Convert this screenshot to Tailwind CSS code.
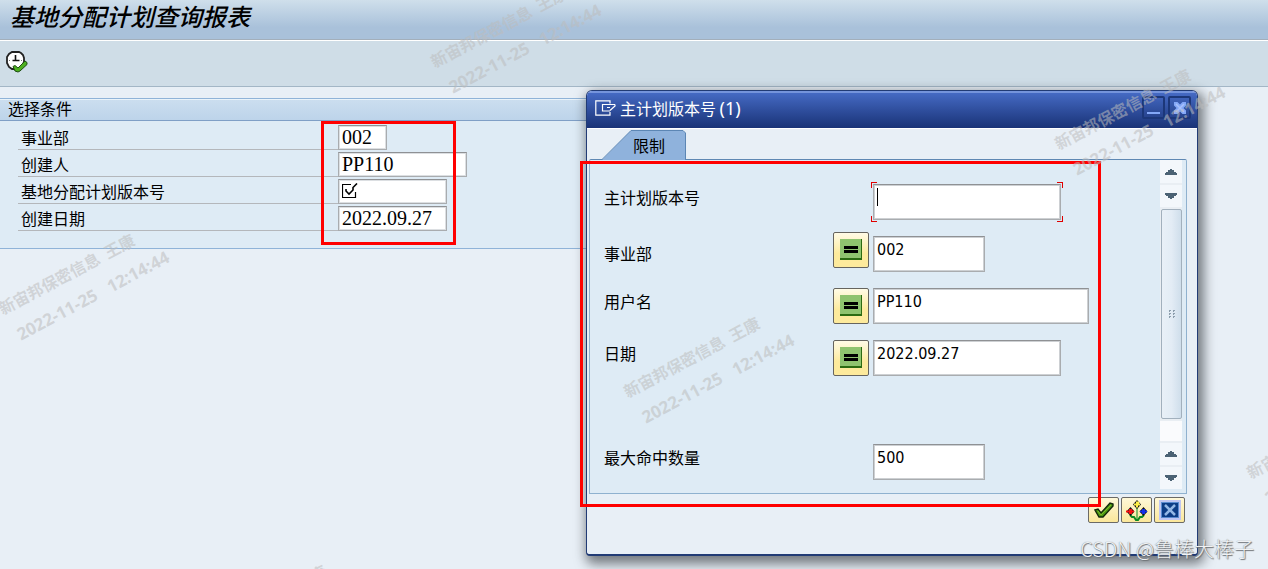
<!DOCTYPE html>
<html lang="zh-CN">
<head>
    <meta charset="UTF-8">
    <meta name="viewport" content="width=device-width, initial-scale=1.0">
    <title>基地分配计划查询报表</title>
    <script src="https://cdn.jsdelivr.net/npm/@tailwindcss/browser@4"></script>
</head>
<body class="relative min-h-screen overflow-hidden bg-[#e8eff6] font-['Noto_Sans_CJK_SC',sans-serif] text-base text-black">
    <!-- Title bar -->
    <header class="h-10 border-b border-[#a3afbb] bg-linear-to-b from-[#cfdfeb] to-[#a9c1da] to-70% px-2.5">
        <h1 class="text-2xl leading-8 font-medium italic">基地分配计划查询报表</h1>
    </header>

    <!-- Toolbar -->
    <div class="flex h-[47px] items-start border-t border-b border-t-white border-b-[#a3b6c6] bg-[#cfdde7] px-1.5 pt-2.5">
        <button type="button" aria-label="执行">
            <svg class="size-[22px]" viewBox="0 0 22 22" fill="none">
                <path d="M6 1h7l2 1 2 2 1 3v4l-2 4-3 3H6l-3-2-2-4V6l2-3z" fill="#fff" stroke="#222" stroke-width="1.800"/>
                <path d="M9.500 4v6M6.500 9.500h7" stroke="#111" stroke-width="1.600"/>
                <path d="M3 9.500h1M15 9.500h1M9.500 15v1" stroke="#777"/>
                <path d="M7 15.500l2-1 3 2.500 7-7 2 1.500v2L14 20l-2 1-3-1z" fill="#4db020" stroke="#1d4d10"/>
            </svg>
        </button>
    </div>

    <!-- Selection criteria -->
    <main class="w-1/2 pt-[11px]">
        <section class="border-y border-[#8fb3d8] bg-[#deebf5]">
            <h2 class="border-t border-b border-t-[#e9f3fa] border-b-[#7f9fc6] bg-linear-to-b from-[#cbdeef] to-[#bdd4ea] pb-1 pl-2 leading-4">选择条件</h2>
            <form class="flex flex-col gap-0.5 pt-1 pb-[17px] pl-[18px]">
                <div class="flex h-[25px]">
                    <label for="division" class="w-80 border-b border-[#b4b7bb] pl-[3px] leading-6">事业部</label>
                    <input id="division" value="002" class="w-[49px] border border-[#a9acaf] border-t-[#8f9194] bg-white pl-[3px] font-['Liberation_Serif',serif] text-xl leading-5 shadow-[inset_0_0_0_1px_#dcdfe2]">
                </div>
                <div class="flex h-[25px]">
                    <label for="creator" class="w-80 border-b border-[#b4b7bb] pl-[3px] leading-6">创建人</label>
                    <input id="creator" value="PP110" class="w-[129px] border border-[#a9acaf] border-t-[#8f9194] bg-white pl-[3px] font-['Liberation_Serif',serif] text-xl leading-5 shadow-[inset_0_0_0_1px_#dcdfe2]">
                </div>
                <div class="flex h-[25px]">
                    <label for="version" class="w-80 border-b border-[#b4b7bb] pl-[3px] leading-6">基地分配计划版本号</label>
                    <div class="relative">
                        <input id="version" class="h-full w-[109px] border border-[#a9acaf] border-t-[#8f9194] bg-white pl-[3px] font-['Liberation_Serif',serif] text-xl leading-5 shadow-[inset_0_0_0_1px_#dcdfe2]">
                        <svg class="pointer-events-none absolute top-1 left-1 size-4" viewBox="0 0 16 16" fill="none" stroke="#000">
                            <path d="M9 1.500H.5v13h13V9" stroke-width="1.200"/>
                            <path d="M4 6v2l3 3 4-4V4.500l4-4" stroke-width="1.600"/>
                        </svg>
                    </div>
                </div>
                <div class="flex h-[25px]">
                    <label for="created" class="w-80 border-b border-[#b4b7bb] pl-[3px] leading-6">创建日期</label>
                    <input id="created" value="2022.09.27" class="w-[109px] border border-[#a9acaf] border-t-[#8f9194] bg-white pl-[3px] font-['Liberation_Serif',serif] text-xl leading-5 shadow-[inset_0_0_0_1px_#dcdfe2]">
                </div>
            </form>
        </section>
    </main>

    <!-- Value restriction dialog -->
    <div role="dialog" aria-labelledby="dialog-title" class="absolute top-[90px] left-[586px] w-[612px] overflow-hidden rounded-t-md rounded-b-sm border border-b-2 border-[#213b75] bg-[#e8eff6] shadow-[3px_5px_12px_3px_rgba(40,45,50,0.6)]">
        <div class="flex h-[37px] items-start border-t-2 border-[#7594dc] bg-linear-to-b from-[#456ac4] to-[#1a3377] pt-[3px] pr-1.5 pl-2 text-white">
            <svg class="mt-1 mr-1 h-4 w-[21px]" viewBox="0 0 21 16" fill="none" stroke="#fff" stroke-width="1.200">
                <path d="M15 3.500V.8H.800v14.400H15V12"/>
                <path d="M20 4.500H7.500v6.500H15M20 4.500v1.500l-5 4.500M12 7.500h3"/>
            </svg>
            <h2 id="dialog-title" class="flex-1 leading-6">主计划版本号 <span class="font-['Noto_Sans',sans-serif] text-lg leading-6">(1)</span></h2>
            <div class="flex gap-[3px]">
                <button type="button" aria-label="最小化" class="flex size-[23px] items-end justify-center rounded-xs border-2 border-[#1c3779] pb-[3px]">
                    <svg class="h-0.5 w-[13px]" viewBox="0 0 13 2"><path d="M0 0h13v2H0z" fill="#84a8f7"/></svg>
                </button>
                <button type="button" aria-label="关闭" class="flex size-[23px] items-center justify-center rounded-xs border-2 border-[#1c3779]">
                    <svg class="size-3" viewBox="0 0 12 12"><path d="M0 0h3.500L6 2.500 8.500 0H12v3.500L9.500 6 12 8.500V12H8.500L6 9.500 3.500 12H0V8.500L2.500 6 0 3.500z" fill="#84a8f7"/><path d="M2 2l8 8M10 2l-8 8" stroke="#a9c1fb" stroke-width="1.500"/></svg>
                </button>
            </div>
        </div>

        <div class="border-t border-white pt-px">
            <button type="button" role="tab" aria-selected="true" class="relative z-10 -mb-px ml-[15px] block h-[30px] w-[84px]">
                <svg class="absolute inset-0 h-full w-full" viewBox="0 0 84 30">
                    <path d="M0 30L29 .5H81l2.500 2.500V30z" fill="#8fb2dc"/>
                    <path d="M0 29.500L29 .5H81l2.500 2.500V30" fill="none" stroke="#5c86b4"/>
                </svg>
                <span class="relative pl-2.5">限制</span>
            </button>

            <div class="mr-2.5 ml-0.5 flex rounded-t-xs border border-[#8fb1cf] border-t-[#5f88b3] bg-[#deebf5]">
                <form class="flex-1 pt-6 pb-[13px] pl-3.5">
                    <div class="flex h-9 items-start">
                        <label for="plan-version" class="w-[269px] pt-px">主计划版本号</label>
                        <div class="relative">
                            <input id="plan-version" class="h-9 w-[188px] border border-[#a9acaf] border-t-[#8f9194] bg-white pb-2.5 pl-[3px] text-base shadow-[inset_0_0_0_1px_#cdd0d3]">
                            <span class="absolute top-1 left-1 h-[18px] w-px bg-black"></span>
                            <span class="absolute -top-0.5 -left-0.5 size-1.5 border-t border-l border-[#e00000]"></span>
                            <span class="absolute -top-0.5 -right-0.5 size-1.5 border-t border-r border-[#e00000]"></span>
                            <span class="absolute -bottom-0.5 -left-0.5 size-1.5 border-b border-l border-[#e00000]"></span>
                            <span class="absolute -right-0.5 -bottom-0.5 size-1.5 border-r border-b border-[#e00000]"></span>
                        </div>
                    </div>
                    <div class="mt-3 flex h-10 items-start">
                        <label for="dialog-division" class="w-[229px] pt-[9px]">事业部</label>
                        <button type="button" aria-label="等于" class="mr-1 flex size-9 items-center justify-center rounded-xs border border-[#66645e] bg-linear-to-b from-[#fffbe6] to-[#fdea9c] to-60%">
                            <svg class="size-[22px]" viewBox="0 0 22 22"><path d="M0 0h22v21H0z" fill="#8fc36f"/><path d="M21 0h1v21H0v-2h21z" fill="#2c6b12"/><path d="M4 7h14v3H4zM4 11h14v3H4z"/></svg>
                        </button>
                        <input id="dialog-division" value="002" class="mt-1 h-9 w-28 border border-[#a9acaf] border-t-[#8f9194] bg-white pb-2.5 pl-[3px] font-['DejaVu_Sans_Condensed','Noto_Sans',sans-serif] text-base shadow-[inset_0_0_0_1px_#cdd0d3]">
                    </div>
                    <div class="mt-4 flex h-9 items-start">
                        <label for="user-name" class="w-[229px] pt-px">用户名</label>
                        <button type="button" aria-label="等于" class="mr-1 flex size-9 items-center justify-center rounded-xs border border-[#66645e] bg-linear-to-b from-[#fffbe6] to-[#fdea9c] to-60%">
                            <svg class="size-[22px]" viewBox="0 0 22 22"><path d="M0 0h22v21H0z" fill="#8fc36f"/><path d="M21 0h1v21H0v-2h21z" fill="#2c6b12"/><path d="M4 7h14v3H4zM4 11h14v3H4z"/></svg>
                        </button>
                        <input id="user-name" value="PP110" class="h-9 w-54 border border-[#a9acaf] border-t-[#8f9194] bg-white pb-2.5 pl-[3px] font-['DejaVu_Sans_Condensed','Noto_Sans',sans-serif] text-base shadow-[inset_0_0_0_1px_#cdd0d3]">
                    </div>
                    <div class="mt-4 flex h-9 items-start">
                        <label for="dialog-date" class="w-[229px] pt-px">日期</label>
                        <button type="button" aria-label="等于" class="mr-1 flex size-9 items-center justify-center rounded-xs border border-[#66645e] bg-linear-to-b from-[#fffbe6] to-[#fdea9c] to-60%">
                            <svg class="size-[22px]" viewBox="0 0 22 22"><path d="M0 0h22v21H0z" fill="#8fc36f"/><path d="M21 0h1v21H0v-2h21z" fill="#2c6b12"/><path d="M4 7h14v3H4zM4 11h14v3H4z"/></svg>
                        </button>
                        <input id="dialog-date" value="2022.09.27" class="h-9 w-[188px] border border-[#a9acaf] border-t-[#8f9194] bg-white pb-2.5 pl-[3px] font-['DejaVu_Sans_Condensed','Noto_Sans',sans-serif] text-base shadow-[inset_0_0_0_1px_#cdd0d3]">
                    </div>
                    <div class="mt-17 flex h-9 items-start">
                        <label for="max-hits" class="w-[269px] pt-px">最大命中数量</label>
                        <input id="max-hits" value="500" class="h-9 w-28 border border-[#a9acaf] border-t-[#8f9194] bg-white pb-2.5 pl-[3px] font-['DejaVu_Sans_Condensed','Noto_Sans',sans-serif] text-base shadow-[inset_0_0_0_1px_#cdd0d3]">
                    </div>
                </form>

                <!-- Scrollbar -->
                <div class="mr-1 mb-1 flex w-[22px] flex-col gap-0.5 bg-[#e9eef3]">
                    <button type="button" aria-label="向上" class="flex h-[23px] items-center justify-center bg-[#f3f7fb]">
                        <svg class="h-1.5 w-3" viewBox="0 0 12 6"><path d="M5 0h2v1h2v2h2v1h1v2H0V4h1V3h2V1h2z" fill="#4b6274"/></svg>
                    </button>
                    <button type="button" aria-label="向下" class="flex h-[22px] items-center justify-center bg-[#f3f7fb]">
                        <svg class="h-1.5 w-3" viewBox="0 0 12 6"><path d="M5 6h2V5h2V3h2V2h1V0H0v2h1v1h2v2h2z" fill="#4b6274"/></svg>
                    </button>
                    <div class="ml-px flex flex-1 items-center justify-center rounded-xs border border-[#a2b0bd] bg-linear-to-r from-[#e9f0f7] via-[#e3ecf5] to-[#cfdeeb]">
                        <svg class="h-2 w-1.5" viewBox="0 0 6 8"><path d="M0 0h2v1H1v1H0zM4 0h2v1H5v1H4zM0 3h2v1H1v1H0zM4 3h2v1H5v1H4zM0 6h2v1H1v1H0zM4 6h2v1H5v1H4z" fill="#8c9dac"/></svg>
                    </div>
                    <div class="h-5 bg-[#fafbfd]"></div>
                    <button type="button" aria-label="上一页" class="flex h-[22px] items-center justify-center bg-[#f3f7fb]">
                        <svg class="h-1.5 w-3" viewBox="0 0 12 6"><path d="M5 0h2v1h2v2h2v1h1v2H0V4h1V3h2V1h2z" fill="#4b6274"/></svg>
                    </button>
                    <button type="button" aria-label="下一页" class="flex h-[22px] items-center justify-center bg-[#f3f7fb]">
                        <svg class="h-1.5 w-3" viewBox="0 0 12 6"><path d="M5 6h2V5h2V3h2V2h1V0H0v2h1v1h2v2h2z" fill="#4b6274"/></svg>
                    </button>
                </div>
            </div>
        </div>

        <div class="flex justify-end gap-0.5 pt-[3px] pr-3 pb-[31px]">
            <button type="button" aria-label="确认" class="flex h-[26px] w-[31px] items-center justify-center rounded-xs border border-[#6b6a66] bg-linear-to-b from-[#fff8d8] to-[#fbe79a]">
                <svg class="h-4 w-5" viewBox="0 0 20 16"><path d="M1 8l3-1 3 4L16 1l3 1v2L9 15H5z" fill="#4f9a12" stroke="#12280a" stroke-width="1.400"/><path d="M4 9l3 4L17 3" fill="none" stroke="#7cbb2c"/></svg>
            </button>
            <button type="button" aria-label="多项选择" class="flex h-[26px] w-[31px] items-center justify-center rounded-xs border border-[#6b6a66] bg-linear-to-b from-[#fff8d8] to-[#fbe79a]">
                <svg class="h-[21px] w-[22px]" viewBox="0 0 22 21">
                    <path d="M11 8v11" stroke="#0a8a22"/>
                    <path d="M4 15l2 2h2l2 3h2l2-3h2l2-2" fill="none" stroke="#0a8a22" stroke-width="2"/>
                    <path d="M11 0l4 4.500L11 9 7 4.500z" fill="#111"/>
                    <path d="M11 1.500h2v2h1v2h-2v2h-2v-2H8v-2h2v-2z" fill="#fff04a"/>
                    <path d="M4.500 7l4 4.500-4 4.500-4-4.500z" fill="#111"/>
                    <path d="M3 9h3v1.500h2v2H6V14H3v-1.500H0v-2h3z" fill="#f51010"/>
                    <path d="M17.500 7l4 4.500-4 4.500-4-4.500z" fill="#111"/>
                    <path d="M16 9h3v1.500h2v2h-2V14h-3v-1.500h-2v-2h2z" fill="#1530e8"/>
                </svg>
            </button>
            <button type="button" aria-label="取消" class="flex h-[26px] w-[31px] items-center justify-center rounded-xs border border-[#6b6a66] bg-linear-to-b from-[#fff8d8] to-[#fbe79a]">
                <svg class="h-5 w-[22px]" viewBox="0 0 22 20"><path d="M0 0h22v20H0z" fill="#c0c6f2"/><path d="M2 2h18v16H2z" fill="#5a8bd0"/><path d="M3 3h16v14H3z" fill="#0c3c86"/><path d="M6 5l10 10M16 5L6 15" stroke="#94b8e6" stroke-width="2.500"/></svg>
            </button>
        </div>
    </div>

    <!-- Highlight frames -->
    <div class="pointer-events-none absolute top-[121px] left-[321px] h-[124px] w-[135px] border-3 border-[#ff0000]"></div>
    <div class="pointer-events-none absolute top-[161px] left-[580px] h-[346px] w-[521px] border-3 border-[#ff0000]"></div>

    <!-- Security watermark -->
    <div id="watermarks" class="pointer-events-none absolute inset-0 overflow-hidden"></div>

    <p class="pointer-events-none absolute right-3.5 bottom-1.5 text-xl leading-7 font-light text-[#f0f2f4] [text-shadow:1px_1px_1px_#6d7175,0_0_1px_#6d7175]">CSDN @鲁棒大棒子</p>

    <script>
        // Top left corner of every stamp
        const stamps = [[-8, 295], [424, 48], [1048, 130], [617, 378], [1240, 459], [184, 626]];

        document.getElementById('watermarks').innerHTML = stamps.map(([x, y]) => `
            <div class="absolute origin-top-left -rotate-28 text-base leading-[32px] font-bold whitespace-pre text-[#bcbcbc]/55" style="left:${x}px;top:${y}px"><p>新宙邦保密信息  王康</p><p class="pl-1 font-['Noto_Sans',sans-serif] text-[17px] leading-[32px]">2022-11-25   12:14:44</p></div>
        `).join('');
    </script>
</body>
</html>
